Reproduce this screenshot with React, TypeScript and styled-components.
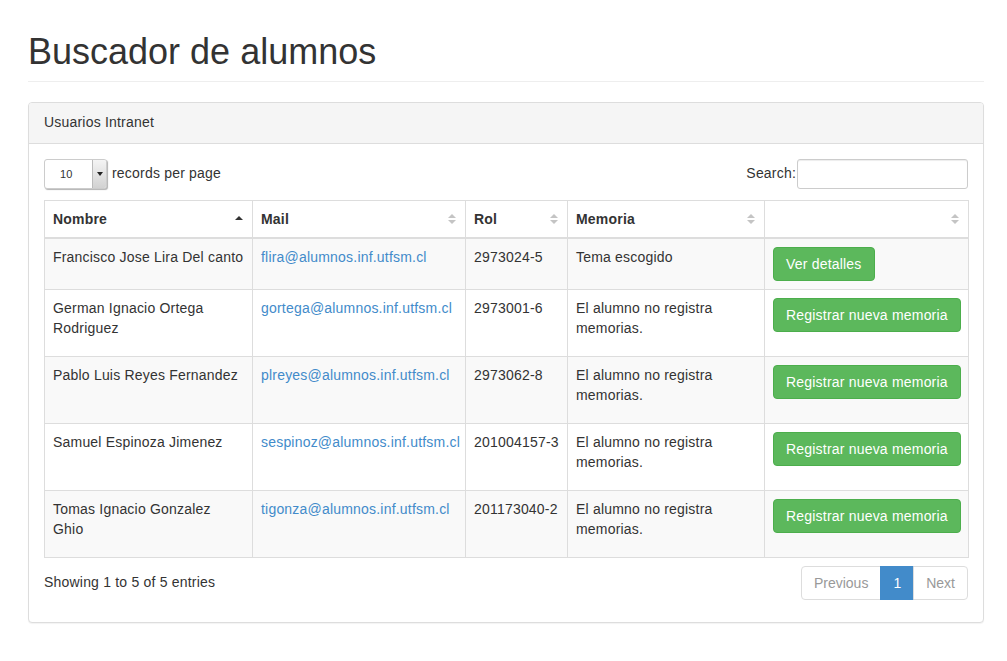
import * as React from 'react';
import styled, { createGlobalStyle } from 'styled-components';

const GlobalStyle = createGlobalStyle`
    html, body {
        margin: 0;
        padding: 0;
        background: #fff;
    }
    body {
        font-family: "Liberation Sans", Arial, sans-serif;
        font-size: 14px;
        line-height: 1.42857;
        letter-spacing: 0.2px;
        color: #333;
    }
    * {
        box-sizing: border-box;
    }
`;

interface Alumno {
    nombre: string;
    mail: string;
    rol: string;
    memoria: string;
    accion: string;
}

const alumnos: Alumno[] = [
    { nombre: 'Francisco Jose Lira Del canto', mail: 'flira@alumnos.inf.utfsm.cl', rol: '2973024-5', memoria: 'Tema escogido', accion: 'Ver detalles' },
    { nombre: 'German Ignacio Ortega Rodriguez', mail: 'gortega@alumnos.inf.utfsm.cl', rol: '2973001-6', memoria: 'El alumno no registra memorias.', accion: 'Registrar nueva memoria' },
    { nombre: 'Pablo Luis Reyes Fernandez', mail: 'plreyes@alumnos.inf.utfsm.cl', rol: '2973062-8', memoria: 'El alumno no registra memorias.', accion: 'Registrar nueva memoria' },
    { nombre: 'Samuel Espinoza Jimenez', mail: 'sespinoz@alumnos.inf.utfsm.cl', rol: '201004157-3', memoria: 'El alumno no registra memorias.', accion: 'Registrar nueva memoria' },
    { nombre: 'Tomas Ignacio Gonzalez Ghio', mail: 'tigonza@alumnos.inf.utfsm.cl', rol: '201173040-2', memoria: 'El alumno no registra memorias.', accion: 'Registrar nueva memoria' },
];

const columns = [
    { label: 'Nombre', width: 208, sorted: true },
    { label: 'Mail', width: 213 },
    { label: 'Rol', width: 102 },
    { label: 'Memoria', width: 197 },
    { label: '', width: 204 },
];

const Page = styled.div`
    padding: 0 23px 40px 28px;
`;

const PageHeader = styled.div`
    padding-top: 32px;
    padding-bottom: 9px;
    margin: 0 0 20px;
    border-bottom: 1px solid #eee;

    h1 {
        margin: 0;
        font-size: 36px;
        font-weight: 500;
        line-height: 1.1;
        letter-spacing: 0;
        color: #333;
    }
`;

const Panel = styled.div`
    border: 1px solid #ddd;
    border-radius: 4px;
    background: #fff;
    box-shadow: 0 1px 1px rgba(0, 0, 0, 0.05);
`;

const PanelHeading = styled.div`
    padding: 10px 15px;
    background: #f5f5f5;
    border-bottom: 1px solid #ddd;
    border-radius: 3px 3px 0 0;
`;

const PanelBody = styled.div`
    padding: 15px 15px 22px;
`;

const Toolbar = styled.div`
    display: flex;
    justify-content: space-between;
    align-items: center;
    height: 30px;
    margin-bottom: 11px;
`;

const Length = styled.label`
    display: flex;
    align-items: center;
    gap: 5px;
`;

const FakeSelect = styled.div`
    width: 63px;
    height: 30px;
    display: flex;
    border: 1px solid #ccc;
    border-radius: 3px;
    background: #fff;
    box-shadow: 1px 1px 1px rgba(0, 0, 0, 0.3);
    overflow: hidden;
`;

const SelectValue = styled.span`
    flex: 1;
    font-size: 11px;
    line-height: 28px;
    padding-left: 15px;
`;

const SelectArrow = styled.span`
    width: 14px;
    display: flex;
    align-items: center;
    justify-content: center;
    background: linear-gradient(#f4f4f4, #d2d2d2);
    border-left: 1px solid #bbb;

    &::after {
        content: '';
        border-left: 3px solid transparent;
        border-right: 3px solid transparent;
        border-top: 4px solid #222;
    }
`;

const Search = styled.label`
    display: flex;
    align-items: center;
    gap: 1px;
`;

const SearchInput = styled.input`
    width: 171px;
    height: 30px;
    border: 1px solid #ccc;
    border-radius: 3px;
    font-family: inherit;
    font-size: 14px;
    padding: 4px 8px;
    box-shadow: inset 0 1px 1px rgba(0, 0, 0, 0.075);
`;

const Table = styled.table`
    width: 100%;
    border-collapse: collapse;
    table-layout: fixed;
    border: 1px solid #ddd;
`;

const Th = styled.th`
    position: relative;
    text-align: left;
    font-weight: bold;
    padding: 8px 24px 8px 8px;
    line-height: 20px;
    border: 1px solid #ddd;
    border-bottom: 2px solid #ddd;
    vertical-align: bottom;
`;

const SortIcon = styled.svg`
    position: absolute;
    right: 8px;
    top: 11px;
`;

const Tr = styled.tr<{ $striped: boolean }>`
    background: ${p => (p.$striped ? '#f9f9f9' : '#fff')};
`;

const Td = styled.td`
    padding: 8px;
    line-height: 20px;
    border: 1px solid #ddd;
    vertical-align: top;

    p {
        margin: 0 0 10px;
    }
`;

const MailLink = styled.a`
    color: #428bca;
    text-decoration: none;
`;

const Button = styled.button`
    font-family: inherit;
    font-size: 14px;
    line-height: 20px;
    letter-spacing: 0.2px;
    white-space: nowrap;
    padding: 6px 12px;
    color: #fff;
    background: #5cb85c;
    border: 1px solid #4cae4c;
    border-radius: 4px;
    cursor: pointer;
`;

const Footer = styled.div`
    display: flex;
    justify-content: space-between;
    align-items: center;
    margin-top: 8px;
`;

const Pagination = styled.ul`
    display: flex;
    list-style: none;
    margin: 0;
    padding: 0;
    letter-spacing: 0;
`;

const PageItem = styled.li<{ $active?: boolean; $disabled?: boolean }>`
    padding: 6px 12px;
    line-height: 20px;
    border: 1px solid ${p => (p.$active ? '#428bca' : '#ddd')};
    margin-left: -1px;
    background: ${p => (p.$active ? '#428bca' : '#fff')};
    color: ${p => (p.$active ? '#fff' : '#999')};

    &:first-child {
        margin-left: 0;
        border-radius: 4px 0 0 4px;
    }
    &:last-child {
        border-radius: 0 4px 4px 0;
    }
`;

const SortArrows: React.FC<{ sorted?: boolean }> = ({ sorted }) =>
    sorted ? (
        <SortIcon width="10" height="14" viewBox="0 0 10 14">
            <path d="M1 8 L5 4 L9 8 Z" fill="#333" />
        </SortIcon>
    ) : (
        <SortIcon width="10" height="14" viewBox="0 0 10 14">
            <path d="M1 6 L5 2 L9 6 Z" fill="#c4c4c4" />
            <path d="M1 8 L5 12 L9 8 Z" fill="#c4c4c4" />
        </SortIcon>
    );

export default function App() {
    return (
        <Page>
            <GlobalStyle />
            <PageHeader>
                <h1>Buscador de alumnos</h1>
            </PageHeader>
            <Panel>
                <PanelHeading>Usuarios Intranet</PanelHeading>
                <PanelBody>
                    <Toolbar>
                        <Length>
                            <FakeSelect>
                                <SelectValue>10</SelectValue>
                                <SelectArrow />
                            </FakeSelect>
                            records per page
                        </Length>
                        <Search>
                            Search:
                            <SearchInput type="text" />
                        </Search>
                    </Toolbar>
                    <Table>
                        <colgroup>
                            {columns.map((c, i) => (
                                <col key={i} style={{ width: c.width }} />
                            ))}
                        </colgroup>
                        <thead>
                            <tr>
                                {columns.map((c, i) => (
                                    <Th key={i}>
                                        {c.label}
                                        <SortArrows sorted={c.sorted} />
                                    </Th>
                                ))}
                            </tr>
                        </thead>
                        <tbody>
                            {alumnos.map((a, i) => (
                                <Tr key={a.rol} $striped={i % 2 === 0}>
                                    <Td>{a.nombre}</Td>
                                    <Td>
                                        <MailLink href="#">{a.mail}</MailLink>
                                    </Td>
                                    <Td>{a.rol}</Td>
                                    <Td>
                                        <p>{a.memoria}</p>
                                    </Td>
                                    <Td>
                                        <Button>{a.accion}</Button>
                                    </Td>
                                </Tr>
                            ))}
                        </tbody>
                    </Table>
                    <Footer>
                        <span>Showing 1 to 5 of 5 entries</span>
                        <Pagination>
                            <PageItem $disabled>Previous</PageItem>
                            <PageItem $active>1</PageItem>
                            <PageItem $disabled>Next</PageItem>
                        </Pagination>
                    </Footer>
                </PanelBody>
            </Panel>
        </Page>
    );
}
